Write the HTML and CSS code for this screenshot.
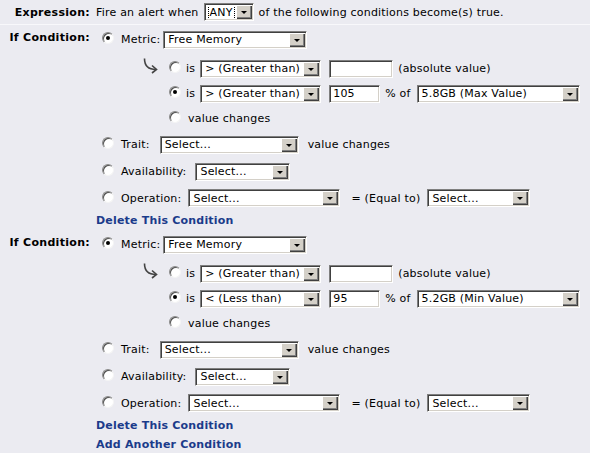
FILE: index.html
```html
<!DOCTYPE html>
<html>
<head>
<meta charset="utf-8">
<link rel="stylesheet" href="styles.css">
</head>
<body>
<div class="page">
  <div class="expr">
    <div class="label">Expression:</div>
    <div class="content line">
      <span>Fire an alert when</span>
      <span class="select w-any"><span class="txt"><span class="focus">ANY</span></span><span class="btn"></span></span>
      <span>of the following conditions become(s) true.</span>
    </div>
  </div>

  <div class="cond">
    <div class="label cond-label">If Condition:</div>
    <div class="content">
      <div class="row metric">
        <span class="radio on"></span><span class="lbl m-metric">Metric:</span>
        <span class="select w-metric"><span class="txt">Free Memory</span><span class="btn"></span></span>
      </div>
      <div class="sub">
        <svg class="arrow" width="18" height="17" viewBox="0 0 18 17"><path d="M2.5 0.5 C2.5 7 6 11.5 14 11.5" fill="none" stroke="#444" stroke-width="1.6"/><path d="M10 7.5 L14.5 11.5 L10 15" fill="none" stroke="#444" stroke-width="1.6"/></svg>
        <div class="subrows">
          <div class="srow"><span class="radio"></span><span class="is">is</span><span class="select w-op"><span class="txt">&gt; (Greater than)</span><span class="btn"></span></span><span class="input w-abs"></span><span>(absolute value)</span></div>
          <div class="srow"><span class="radio on"></span><span class="is">is</span><span class="select w-op"><span class="txt">&gt; (Greater than)</span><span class="btn"></span></span><span class="input w-pct">105</span><span class="pof">% of</span><span class="select w-base"><span class="txt">5.8GB (Max Value)</span><span class="btn"></span></span></div>
          <div class="srow"><span class="radio"></span><span class="vc">value changes</span></div>
        </div>
      </div>
      <div class="row r27"><span class="radio"></span><span class="lbl m-trait">Trait:</span><span class="select w-trait"><span class="txt">Select...</span><span class="btn"></span></span><span class="after">value changes</span></div>
      <div class="row r27"><span class="radio"></span><span class="lbl m-avail">Availability:</span><span class="select w-avail"><span class="txt">Select...</span><span class="btn"></span></span></div>
      <div class="row r26"><span class="radio"></span><span class="lbl m-oper">Operation:</span><span class="select w-oper"><span class="txt">Select...</span><span class="btn"></span></span><span class="after eq">= (Equal to)</span><span class="select w-eq"><span class="txt">Select...</span><span class="btn"></span></span></div>
      <div class="link-row"><a class="link" href="#">Delete This Condition</a></div>
    </div>
  </div>

  <div class="cond">
    <div class="label cond-label">If Condition:</div>
    <div class="content">
      <div class="row metric">
        <span class="radio on"></span><span class="lbl m-metric">Metric:</span>
        <span class="select w-metric"><span class="txt">Free Memory</span><span class="btn"></span></span>
      </div>
      <div class="sub">
        <svg class="arrow" width="18" height="17" viewBox="0 0 18 17"><path d="M2.5 0.5 C2.5 7 6 11.5 14 11.5" fill="none" stroke="#444" stroke-width="1.6"/><path d="M10 7.5 L14.5 11.5 L10 15" fill="none" stroke="#444" stroke-width="1.6"/></svg>
        <div class="subrows">
          <div class="srow"><span class="radio"></span><span class="is">is</span><span class="select w-op"><span class="txt">&gt; (Greater than)</span><span class="btn"></span></span><span class="input w-abs"></span><span>(absolute value)</span></div>
          <div class="srow"><span class="radio on"></span><span class="is">is</span><span class="select w-op"><span class="txt">&lt; (Less than)</span><span class="btn"></span></span><span class="input w-pct">95</span><span class="pof">% of</span><span class="select w-base"><span class="txt">5.2GB (Min Value)</span><span class="btn"></span></span></div>
          <div class="srow"><span class="radio"></span><span class="vc">value changes</span></div>
        </div>
      </div>
      <div class="row r27"><span class="radio"></span><span class="lbl m-trait">Trait:</span><span class="select w-trait"><span class="txt">Select...</span><span class="btn"></span></span><span class="after">value changes</span></div>
      <div class="row r27"><span class="radio"></span><span class="lbl m-avail">Availability:</span><span class="select w-avail"><span class="txt">Select...</span><span class="btn"></span></span></div>
      <div class="row r26"><span class="radio"></span><span class="lbl m-oper">Operation:</span><span class="select w-oper"><span class="txt">Select...</span><span class="btn"></span></span><span class="after eq">= (Equal to)</span><span class="select w-eq"><span class="txt">Select...</span><span class="btn"></span></span></div>
      <div class="link-row"><a class="link" href="#">Delete This Condition</a></div>
      <div class="link-row"><a class="link" href="#">Add Another Condition</a></div>
    </div>
  </div>
</div>
</body>
</html>
```

FILE: styles.css
```css
html, body {
  margin: 0;
  padding: 0;
  background: #ebebf1;
}
body {
  font-family: "DejaVu Sans", Verdana, sans-serif;
  font-size: 11px;
  letter-spacing: 0.2px;
  color: #000;
  width: 590px;
  height: 453px;
  overflow: hidden;
}
.page {
  display: flex;
  flex-direction: column;
}
.expr {
  display: flex;
  height: 24px;
  align-items: center;
  border-bottom: 1px solid #f8f8fb;
}
.label {
  width: 90px;
  text-align: right;
  font-weight: bold;
  letter-spacing: 0.3px;
  flex: none;
}
.content {
  margin-left: 6px;
  flex: 1;
}
.line {
  display: flex;
  align-items: center;
  gap: 5px;
}
.cond {
  display: flex;
  height: 205px;
}
.cond:last-child {
  height: auto;
}
.cond-label {
  padding-top: 6px;
}
.row {
  display: flex;
  align-items: center;
  white-space: nowrap;
}
.metric { height: 29px; }
.r27 { height: 27px; }
.r26 { height: 26px; }
.radio {
  width: 12px;
  height: 12px;
  box-sizing: border-box;
  border-radius: 50%;
  background: #fff;
  border: 1px solid;
  border-color: #8a8a8a #f4f4f4 #f4f4f4 #8a8a8a;
  box-shadow: inset 1px 1px 0 #505050;
  position: relative;
  flex: none;
}
.row > .radio { margin-left: 6px; margin-top: -3px; }
.radio.on::after {
  content: "";
  position: absolute;
  left: 3px;
  top: 3px;
  width: 4px;
  height: 4px;
  border-radius: 50%;
  background: #000;
}
.lbl { margin-left: 7px; margin-right: 5px; }
.m-metric { margin-right: 3px; }
.m-trait { margin-right: 10px; }
.m-avail { margin-right: 9px; }
.m-oper { margin-right: 7px; }
.select {
  display: inline-flex;
  align-items: center;
  height: 18px;
  box-sizing: border-box;
  background: #fff;
  border: 1px solid;
  border-color: #7f7f7f #ffffff #ffffff #7f7f7f;
  box-shadow: inset 1px 1px 0 #404040, inset -1px -1px 0 #d4d0c8;
  flex: none;
  padding: 1px;
}
.select .txt {
  flex: 1;
  padding-left: 3px;
  overflow: hidden;
  white-space: nowrap;
}
.select .btn {
  width: 16px;
  height: 14px;
  box-sizing: border-box;
  background: #d4d0c8;
  box-shadow: inset 1px 1px 0 #fff, inset -1px -1px 0 #404040, inset -2px -2px 0 #808080;
  position: relative;
  flex: none;
}
.select .btn::after {
  content: "";
  position: absolute;
  left: 5px;
  top: 6px;
  border-left: 3px solid transparent;
  border-right: 3px solid transparent;
  border-top: 3px solid #000;
}
.focus {
  outline: 1px dotted #000;
  outline-offset: 0;
  padding: 0 1px;
}
.input {
  display: inline-flex;
  align-items: center;
  height: 18px;
  box-sizing: border-box;
  background: #fff;
  border: 1px solid;
  border-color: #7f7f7f #ffffff #ffffff #7f7f7f;
  box-shadow: inset 1px 1px 0 #404040, inset -1px -1px 0 #d4d0c8;
  padding-left: 3px;
  flex: none;
  margin-left: 8px;
  margin-right: 5px;
}
.w-any { width: 50px; }
.w-metric { width: 144px; }
.w-op { width: 121px; }
.w-abs { width: 64px; }
.w-pct { width: 51px; }
.w-base { width: 163px; }
.w-trait { width: 139px; }
.w-avail { width: 95px; }
.w-oper { width: 152px; }
.w-eq { width: 103px; }
.sub {
  display: flex;
  margin-top: 2px;
}
.arrow {
  margin-left: 46px;
  margin-top: 2px;
  flex: none;
}
.subrows {
  margin-left: 9px;
  display: flex;
  flex-direction: column;
}
.srow {
  height: 25px;
  display: flex;
  align-items: center;
  white-space: nowrap;
}
.srow > .radio { margin-top: -3px; }
.is { margin-left: 5px; margin-right: 5px; }
.vc { margin-left: 7px; }
.pof { margin-right: 6px; }
.after { margin-left: 9px; }
.eq { margin-left: 11px; margin-right: 7px; }
.link-row {
  height: 18px;
  display: flex;
  align-items: center;
}
.link-row + .link-row {
  margin-top: 1px;
}
.link {
  color: #1b3b8b;
  font-weight: bold;
  letter-spacing: 0.2px;
  text-decoration: none;
}
```
